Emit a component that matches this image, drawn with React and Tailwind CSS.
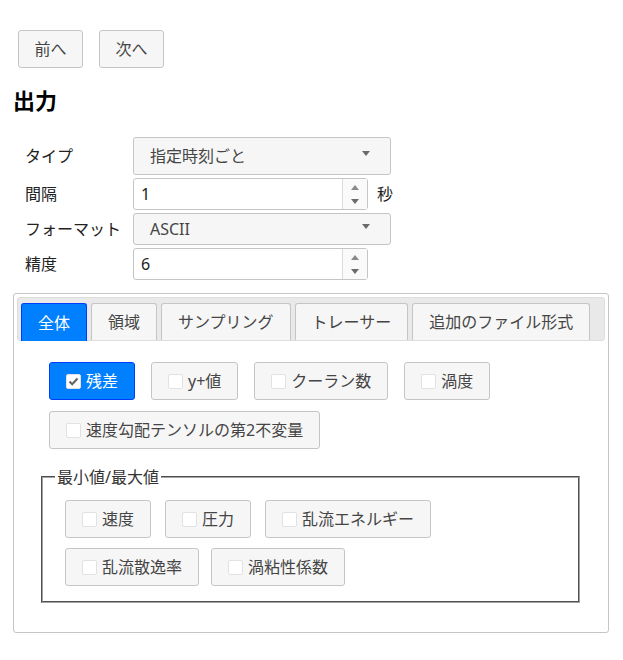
import React from "react";

const FONT = { fontFamily: '"Noto Sans", "Noto Sans CJK JP", sans-serif' };

function Caret({ className = "" }) {
  return (
    <svg width="8" height="5" viewBox="0 0 8 5" className={className}>
      <polygon points="0,0 8,0 4,5" fill="#6b6b6b" />
    </svg>
  );
}

function CaretUp() {
  return (
    <svg width="8" height="5" viewBox="0 0 8 5">
      <polygon points="0,5 8,5 4,0" fill="#8a8a8a" />
    </svg>
  );
}

function SelectBox({ value, tall }) {
  return (
    <div
      className={`flex w-[258px] items-center justify-between rounded-[3px] border border-[#c5c5c5] bg-[#f6f6f6] pl-[16px] pr-[20px] text-[16px] text-[#454545] ${
        tall ? "h-[38px]" : "h-[32px]"
      }`}
    >
      <span>{value}</span>
      <Caret className="-mt-[6px]" />
    </div>
  );
}

function NumberBox({ value }) {
  return (
    <div className="flex h-[32px] w-[235px] rounded-[3px] border border-[#c5c5c5] bg-white text-[16px] text-[#222]">
      <div className="flex flex-1 items-center pl-[7px]">{value}</div>
      <div className="flex w-[25px] flex-col items-center justify-center gap-[9px] border-l border-[#dcdcdc] bg-[#fafafa]">
        <CaretUp />
        <Caret />
      </div>
    </div>
  );
}

function Check({ checked }) {
  return (
    <span className="flex h-[15px] w-[15px] items-center justify-center rounded-[2px] border border-[#e2e2e2] bg-white">
      {checked && (
        <svg width="11" height="9" viewBox="0 0 11 9">
          <polyline
            points="1.5,4.5 4.2,7.2 9.5,1.5"
            fill="none"
            stroke="#666"
            strokeWidth="2.2"
          />
        </svg>
      )}
    </span>
  );
}

function CheckButton({ label, checked }) {
  return (
    <div
      className={`flex h-[38px] items-center gap-[5px] rounded-[3px] border px-[16px] text-[16px] ${
        checked
          ? "border-[#003eff] bg-[#007fff] text-white"
          : "border-[#c5c5c5] bg-[#f6f6f6] text-[#454545]"
      }`}
    >
      <Check checked={checked} />
      <span>{label}</span>
    </div>
  );
}

function Tab({ label, active }) {
  return (
    <div
      className={`flex items-center rounded-t-[3px] border border-b-0 px-[16px] text-[16px] ${
        active
          ? "-mb-px h-[38px] border-[#003eff] bg-[#007fff] text-white"
          : "h-[37px] border-[#c5c5c5] bg-[#f6f6f6] text-[#454545]"
      }`}
    >
      {label}
    </div>
  );
}

export default function App() {
  return (
    <div className="min-h-[660px] bg-white pl-[13px] pr-[14px] pt-[30px]" style={FONT}>
      <div className="flex gap-[16px] pl-[5px]">
        {["前へ", "次へ"].map((t) => (
          <div
            key={t}
            className="flex h-[38px] w-[65px] items-center justify-center rounded-[3px] border border-[#c5c5c5] bg-[#f6f6f6] text-[16px] text-[#454545]"
          >
            {t}
          </div>
        ))}
      </div>

      <h2 className="mt-[17px] h-[30px] text-[22px] font-bold leading-[30px] text-black">
        出力
      </h2>

      <div className="mt-[22px] flex flex-col gap-[3px] pl-[12px] text-[16px] text-[#222]">
        <div className="flex items-center">
          <div className="w-[108px]">タイプ</div>
          <SelectBox value="指定時刻ごと" tall />
        </div>
        <div className="flex items-center">
          <div className="w-[108px]">間隔</div>
          <NumberBox value="1" />
          <span className="ml-[9px]">秒</span>
        </div>
        <div className="flex items-center">
          <div className="w-[108px]">フォーマット</div>
          <SelectBox value="ASCII" />
        </div>
        <div className="flex items-center">
          <div className="w-[108px]">精度</div>
          <NumberBox value="6" />
        </div>
      </div>

      <div className="mt-[13px] w-[596px] rounded-[3px] border border-[#c5c5c5] p-[3px]">
        <div className="flex gap-[4px] rounded-[3px] border border-[#dddddd] bg-[#e9e9e9] pl-[3px] pt-[5px]">
          <Tab label="全体" active />
          <Tab label="領域" />
          <Tab label="サンプリング" />
          <Tab label="トレーサー" />
          <Tab label="追加のファイル形式" />
        </div>

        <div className="px-[24px] pb-[26px] pt-[21px]">
          <div className="flex flex-wrap gap-x-[16px] gap-y-[11px] pl-[8px]">
            <CheckButton label="残差" checked />
            <CheckButton label="y+値" />
            <CheckButton label="クーラン数" />
            <CheckButton label="渦度" />
            <CheckButton label="速度勾配テンソルの第2不変量" />
          </div>

          <fieldset className="mt-[16px] w-[539px] border-2 border-[#a3a3a3] px-[12px] pb-[15px] [border-style:groove]">
            <legend className="px-[2px] text-[16px] leading-[24px] text-[#333]">
              最小値/最大値
            </legend>
            <div className="flex flex-col gap-[10px] pl-[10px] pt-[11px]">
              <div className="flex gap-[14px]">
                <CheckButton label="速度" />
                <CheckButton label="圧力" />
                <CheckButton label="乱流エネルギー" />
              </div>
              <div className="flex gap-[12px]">
                <CheckButton label="乱流散逸率" />
                <CheckButton label="渦粘性係数" />
              </div>
            </div>
          </fieldset>
        </div>
      </div>
    </div>
  );
}
